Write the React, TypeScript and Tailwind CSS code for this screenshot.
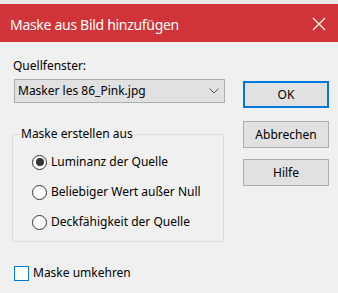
const font = { fontFamily: '"Noto Sans", "Open Sans", sans-serif' }

function Radio({ label, checked }: { label: string; checked?: boolean }) {
  return (
    <div className="flex items-center h-[16px]">
      <div className="w-[15px] h-[15px] rounded-full border border-[#333] bg-white flex items-center justify-center">
        {checked && <div className="w-[8px] h-[8px] rounded-full bg-[#333]" />}
      </div>
      <span className="ml-[4px] text-[12px] leading-[16px] text-black">{label}</span>
    </div>
  )
}

function Button({ label, focused }: { label: string; focused?: boolean }) {
  return (
    <button
      className={`w-[86px] h-[27px] bg-[#e1e1e1] text-[12px] text-black flex items-center justify-center ${
        focused ? 'border-2 border-[#0078d7]' : 'border border-[#adadad]'
      }`}
    >
      {label}
    </button>
  )
}

export default function App() {
  return (
    <div className="w-[338px] h-[293px] bg-[#f0f0f0] flex flex-col overflow-hidden" style={font}>
      <div className="h-[4px] bg-[#e8e8e8]" />
      {/* Titelleiste */}
      <div className="h-[38px] bg-[#d13438] flex items-center justify-between pl-[10px] pr-[12px]">
        <span className="text-white text-[14px] leading-none pt-[3px] tracking-[-0.3px]">Maske aus Bild hinzufügen</span>
        <svg width="14" height="14" viewBox="0 0 14 14" className="mt-[2px]">
          <path d="M1 1L13 13M13 1L1 13" stroke="white" strokeWidth="1.2" fill="none" />
        </svg>
      </div>

      <div className="flex pl-[12px]">
        {/* linke Spalte */}
        <div className="w-[213px] flex flex-col">
          <div className="mt-[16px] ml-[1px] text-[12px] leading-[16px] text-black">Quellfenster:</div>
          <div className="mt-[5px] ml-[2px] w-[211px] h-[24px] bg-[#e1e1e1] border border-[#adadad] flex items-center justify-between pl-[3px] pr-[5px]">
            <span className="text-[12px] text-black">Masker les 86_Pink.jpg</span>
            <svg width="10" height="6" viewBox="0 0 10 6">
              <path d="M0.5 0.5L5 5L9.5 0.5" stroke="#555" strokeWidth="1" fill="none" />
            </svg>
          </div>

          <fieldset className="mt-[23px] w-[212px] border border-[#dcdcdc] pb-[11px]">
            <legend className="ml-[6px] px-[2px] text-[12px] leading-[16px] text-black">Maske erstellen aus</legend>
            <div className="flex flex-col gap-[14px] mt-[12px] pl-[19px]">
              <Radio label="Luminanz der Quelle" checked />
              <Radio label="Beliebiger Wert außer Null" />
              <Radio label="Deckfähigkeit der Quelle" />
            </div>
          </fieldset>

          <div className="mt-[23px] ml-[2px] flex items-center">
            <div className="w-[15px] h-[15px] border border-[#0078d7] bg-white" />
            <span className="ml-[4px] text-[12px] leading-[16px] text-black">Maske umkehren</span>
          </div>
        </div>

        {/* rechte Spalte */}
        <div className="ml-[18px] flex flex-col pt-[39px]">
          <Button label="OK" focused />
          <div className="mt-[13px]">
            <Button label="Abbrechen" />
          </div>
          <div className="mt-[11px]">
            <Button label="Hilfe" />
          </div>
        </div>
      </div>
    </div>
  )
}
